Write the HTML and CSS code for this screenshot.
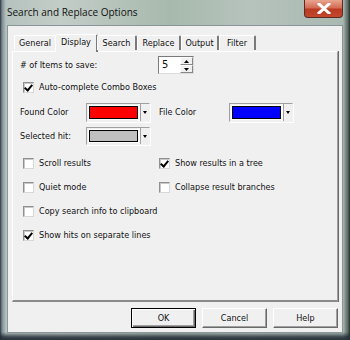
FILE: index.html
```html
<!DOCTYPE html>
<html lang="en">
<head>
  <meta charset="UTF-8">
  <title>Search and Replace Options</title>
  <link rel="stylesheet" href="styles.css">
</head>
<body>

<div class="window">
  <div class="titlebar">
    <span class="title">Search and Replace Options</span>
    <div class="close">
      <svg width="14" height="11" viewBox="0 0 14 11">
        <path d="M2 1 L12 10 M12 1 L2 10" stroke="#fff" stroke-width="3" stroke-linecap="square"/>
      </svg>
    </div>
  </div>

  <div class="client">
    <div class="tabs">
      <div class="tab general">General</div>
      <div class="tab active">Display</div>
      <div class="tab search">Search</div>
      <div class="tab replace">Replace</div>
      <div class="tab output">Output</div>
      <div class="tab filter">Filter</div>
    </div>

    <div class="panel">
      <div class="row items">
        <span class="label">#&nbsp;of Items to save:</span>
        <div class="spin">
          <span class="spin-value">5</span>
          <div class="spin-btns">
            <div class="spin-btn"><svg width="5" height="3"><path d="M0 3 L2.5 0 L5 3 Z" fill="#000"/></svg></div>
            <div class="spin-btn"><svg width="5" height="3"><path d="M0 0 L2.5 3 L5 0 Z" fill="#000"/></svg></div>
          </div>
        </div>
      </div>

      <label class="check auto"><span class="box checked"></span>Auto-complete Combo Boxes</label>

      <div class="row colors">
        <span class="label found">Found Color</span>
        <div class="combo"><span class="swatch" style="background:#ff0000"></span><span class="arrow"></span></div>
        <span class="label file">File Color</span>
        <div class="combo"><span class="swatch" style="background:#0000ff"></span><span class="arrow"></span></div>
      </div>

      <div class="row selected">
        <span class="label found">Selected hit:</span>
        <div class="combo"><span class="swatch" style="background:#c0c0c0"></span><span class="arrow"></span></div>
      </div>

      <div class="options">
        <label class="check"><span class="box"></span>Scroll results</label>
        <label class="check"><span class="box checked"></span>Show results in a tree</label>
        <label class="check"><span class="box"></span>Quiet mode</label>
        <label class="check"><span class="box"></span>Collapse result branches</label>
        <label class="check wide"><span class="box"></span>Copy search info to clipboard</label>
        <label class="check wide"><span class="box checked"></span>Show hits on separate lines</label>
      </div>
    </div>

    <div class="buttons">
      <button class="btn default">OK</button>
      <button class="btn">Cancel</button>
      <button class="btn">Help</button>
    </div>
  </div>
</div>

</body>
</html>
```

FILE: styles.css
```css
body {
  margin: 0;
  width: 350px;
  height: 340px;
  overflow: hidden;
  font-family: 'DejaVu Sans Condensed', 'DejaVu Sans', sans-serif;
  font-stretch: condensed;
  font-size: 9px;
  color: #111;
  background: #9fb0a8;
}

.window {
  height: 340px;
  box-sizing: border-box;
  padding: 0 7px 7px 7px;
  background:
    linear-gradient(180deg, rgba(0, 0, 0, 0) 0px, rgba(0, 0, 0, 0) 332px, rgba(30, 40, 50, 0.8) 337px, #27323a 340px),
    linear-gradient(90deg, #2b343c 0px, #7d8a94 2px, #b5c2bd 6px, #c3cdc8 60px, #a7b9ac 170px, #b6c3bd 250px, #aab8b2 343px, #56655f 348px, #26302e 350px);
  display: flex;
  flex-direction: column;
}

.titlebar {
  height: 25px;
  display: flex;
  align-items: flex-start;
  justify-content: space-between;
}

.title {
  font-family: 'Open Sans', 'Noto Sans', sans-serif;
  font-stretch: normal;
  font-size: 10px;
  color: #111;
  margin-top: 5px;
}

.close {
  width: 39px;
  height: 18px;
  box-sizing: border-box;
  border: 1px solid #5b2a22;
  border-top: none;
  border-radius: 0 0 4px 4px;
  background: linear-gradient(180deg, #e8a590 0px, #d46a52 8px, #b83a22 9px, #c44a2e 18px);
  display: flex;
  align-items: center;
  justify-content: center;
}

.client {
  flex: 1;
  background: #f0f0f0;
  border: 1px solid #8a9599;
  box-sizing: border-box;
  padding: 7px 4px 0 4px;
  display: flex;
  flex-direction: column;
}

.tabs {
  display: flex;
  align-items: flex-end;
  height: 18px;
  padding-left: 2px;
  position: relative;
  z-index: 1;
}

.tab {
  height: 15px;
  line-height: 14px;
  box-sizing: border-box;
  text-align: center;
  background: #f0f0f0;
  border-top: 1px solid #fff;
  border-left: 1px solid #fff;
  border-right: 2px solid #7a7a7a;
  border-radius: 2px 2px 0 0;
  margin-bottom: 1px;
}

.tab.general { width: 43px; }
.tab.search { width: 40px; }
.tab.replace { width: 44px; }
.tab.output { width: 38px; }
.tab.filter { width: 37px; }

.tab.active {
  width: 43px;
  height: 18px;
  line-height: 15px;
  margin: 0 -1px -1px -2px;
}

.panel {
  height: 251px;
  box-sizing: border-box;
  border-top: 1px solid #fff;
  border-left: 1px solid #fff;
  border-right: 1px solid #a0a0a0;
  border-bottom: 2px solid #8a8a8a;
  box-shadow: 1px 0 0 #696969;
  padding: 4px 0 0 7px;
  display: flex;
  flex-direction: column;
}

.row {
  display: flex;
  align-items: center;
  white-space: nowrap;
}

.items {
  height: 18px;
}

.items .label {
  width: 138px;
}

.spin {
  width: 36px;
  height: 18px;
  box-sizing: border-box;
  background: #fff;
  border: 1px solid #7b7b7b;
  border-right-color: #dcdcdc;
  border-bottom-color: #dcdcdc;
  display: flex;
}

.spin-value {
  flex: 1;
  padding-left: 3px;
  line-height: 15px;
  font-size: 11px;
}

.spin-btns {
  width: 13px;
  display: flex;
  flex-direction: column;
}

.spin-btn {
  flex: 1;
  background: #f0f0f0;
  border-top: 1px solid #fff;
  border-left: 1px solid #fff;
  border-bottom: 1px solid #888;
  border-right: 1px solid #888;
  display: flex;
  align-items: center;
  justify-content: center;
}

.check {
  display: flex;
  align-items: center;
  height: 14px;
  white-space: nowrap;
}

.box {
  width: 11px;
  height: 11px;
  box-sizing: border-box;
  margin: 0 5px 0 3px;
  background: #fff;
  border: 1px solid #8e8f8f;
  border-right-color: #d8d8d8;
  border-bottom-color: #d8d8d8;
  box-shadow: inset 1px 1px 0 #c8c8c8;
  position: relative;
}

.box.checked::after {
  content: '';
  position: absolute;
  left: 2px;
  top: 0px;
  width: 3px;
  height: 6px;
  border-right: 2px solid #000;
  border-bottom: 2px solid #000;
  transform: rotate(40deg);
}

.auto {
  margin-top: 6px;
}

.colors {
  margin-top: 8px;
  height: 20px;
}

.label.found {
  width: 66px;
}

.label.file {
  width: 70px;
  margin-left: 9px;
}

.combo {
  width: 64px;
  height: 19px;
  box-sizing: border-box;
  display: flex;
  border: 1px solid #f0f0f0;
  border-top-color: #a0a0a0;
  border-left-color: #a0a0a0;
  box-shadow: 1px 1px 0 #fff;
}

.swatch {
  flex: 1;
  margin: 2px 1px 2px 2px;
  border: 1px solid #000;
  box-shadow: 0 0 0 1px #fff;
}

.arrow {
  width: 9px;
  border-left: 1px solid #fff;
  box-shadow: inset 1px 0 0 #a0a0a0, -1px 0 0 #fff;
  position: relative;
}

.arrow::after {
  content: '';
  position: absolute;
  left: 3px;
  top: 7px;
  border-left: 2px solid transparent;
  border-right: 2px solid transparent;
  border-top: 3px solid #000;
}

.selected {
  margin-top: 5px;
  height: 18px;
}

.selected .combo {
  height: 18px;
}

.options {
  display: grid;
  grid-template-columns: 136px 1fr;
  row-gap: 10px;
  margin-top: 11px;
}

.options .check.wide {
  grid-column: 1 / 3;
}

.buttons {
  display: flex;
  justify-content: flex-end;
  gap: 6px;
  margin-top: 6px;
}

.btn {
  width: 65px;
  height: 20px;
  box-sizing: border-box;
  font-family: 'DejaVu Sans Condensed', 'DejaVu Sans', sans-serif;
  font-stretch: condensed;
  font-size: 9px;
  background: #f0f0f0;
  border: 1px solid;
  border-color: #fff #696969 #696969 #fff;
  box-shadow: inset -1px -1px 0 #a0a0a0;
  padding: 0;
  color: #111;
}

.btn.default {
  border: 1px solid #000;
  box-shadow: inset 1px 1px 0 #fff, inset -1px -1px 0 #696969, inset -2px -2px 0 #a0a0a0;
}
```
